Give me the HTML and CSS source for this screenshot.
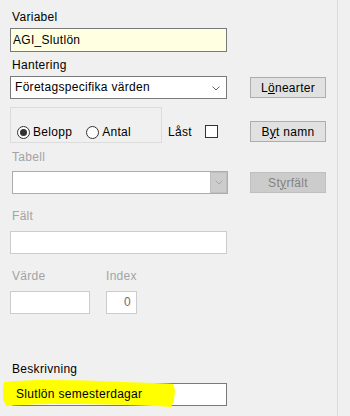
FILE: index.html
```html
<!DOCTYPE html>
<html lang="sv">
<head>
    <meta charset="UTF-8">
    <title>Variabel</title>
    <link rel="stylesheet" href="styles.css">
</head>
<body>
    <div class="panel">
        <div class="field">
            <label class="lbl">Variabel</label>
            <div class="box box-note">AGI_Slutlön</div>
        </div>

        <div class="field field-hantering">
            <label class="lbl">Hantering</label>
            <div class="row">
                <div class="combo">
                    <span>Företagspecifika värden</span>
                    <svg class="chev" width="8" height="5" viewBox="0 0 8 5"><polyline points="0.5,0.5 4,4 7.5,0.5" fill="none" stroke="#606060" stroke-width="1"/></svg>
                </div>
                <button class="btn">L<u>ö</u>nearter</button>
            </div>
        </div>

        <div class="row opts">
            <div class="group">
                <span class="opt"><span class="radio checked"></span>Belopp</span>
                <span class="opt opt-second"><span class="radio"></span>Antal</span>
            </div>
            <span class="lock">Låst</span>
            <span class="check"></span>
            <button class="btn btn-low">B<u>y</u>t namn</button>
        </div>

        <div class="field field-tabell">
            <label class="lbl off">Tabell</label>
            <div class="row">
                <div class="combo combo-off">
                    <span class="drop">
                        <svg width="8" height="5" viewBox="0 0 8 5"><polyline points="0.5,0.5 4,4 7.5,0.5" fill="none" stroke="#a8a8a8" stroke-width="1"/></svg>
                    </span>
                </div>
                <button class="btn btn-off">St<u>y</u>rfält</button>
            </div>
        </div>

        <div class="field field-falt">
            <label class="lbl off">Fält</label>
            <div class="box box-off"></div>
        </div>

        <div class="field field-varde">
            <div class="col">
                <label class="lbl off">Värde</label>
                <div class="box box-off box-varde"></div>
            </div>
            <div class="col col-index">
                <label class="lbl off">Index</label>
                <div class="box box-off box-index">0</div>
            </div>
        </div>

        <div class="field field-beskr">
            <label class="lbl">Beskrivning</label>
            <div class="box box-beskr">
                <!-- highlighter stroke over the field -->
                <svg class="marker" width="176" height="30" viewBox="0 0 176 30">
                    <path d="M2,3 C30,0 80,1 120,3 C145,4 162,4 171,5 L173,11 L172,22 L169,28 C140,26 100,25 60,25 C35,25 15,26 4,27 L1,20 L1,9 Z" fill="#ffff00"/>
                </svg>
                <span class="txt">Slutlön semesterdagar</span>
            </div>
        </div>
    </div>
</body>
</html>
```

FILE: styles.css
```css
/* Variabel dialog */
body {
    margin: 0;
    background-color: #f0f0f0;
    font-family: "Liberation Sans", Arial, sans-serif;
    font-size: 12px;
    letter-spacing: 0.3px;
    color: #000;
}

.panel {
    width: 338px;
    height: 416px;
    box-sizing: border-box;
    border-right: 1px solid #dadada;
    padding: 10px 0 0 10px;
}

.lbl {
    display: block;
    line-height: 14px;
    padding-left: 2px;
    margin-bottom: 4px;
}

.lbl.off {
    color: #a3a3a3;
}

.row {
    display: flex;
    align-items: center;
    width: 316px;
}

.box {
    box-sizing: border-box;
    width: 217px;
    height: 23px;
    border: 1px solid #7a7a7a;
    background-color: #fff;
    padding: 0 2px;
    line-height: 21px;
    white-space: nowrap;
}

.box-note {
    height: 24px;
    line-height: 22px;
    background-color: #ffffe1;
}

.box-off {
    border-color: #cccccc;
}

/* Hantering */
.field-hantering {
    margin-top: 6px;
}

.combo {
    position: relative;
    box-sizing: border-box;
    width: 217px;
    height: 23px;
    border: 1px solid #7a7a7a;
    background-color: #fff;
    padding-left: 4px;
    line-height: 21px;
}

.chev {
    position: absolute;
    right: 6px;
    top: 9px;
}

.btn {
    box-sizing: border-box;
    width: 76px;
    height: 21px;
    margin-left: auto;
    padding: 0;
    border: 1px solid #adadad;
    background-color: #e1e1e1;
    font-family: inherit;
    font-size: 12px;
    letter-spacing: 0.3px;
    color: #000;
}

.btn-off {
    background-color: #cccccc;
    border-color: #bfbfbf;
    color: #838383;
}

/* radio group row */
.opts {
    margin-top: 8px;
    height: 36px;
    align-items: flex-end;
}

.group {
    box-sizing: border-box;
    width: 152px;
    height: 36px;
    border: 1px solid #dcdcdc;
    display: flex;
    align-items: flex-end;
    padding: 0 0 3px 6px;
}

.opt {
    display: flex;
    align-items: center;
    line-height: 14px;
}

.opt-second {
    margin-left: 14px;
}

.radio {
    position: relative;
    box-sizing: border-box;
    width: 13px;
    height: 13px;
    margin-right: 3px;
    border: 1px solid #333;
    border-radius: 50%;
    background-color: #fff;
}

.radio.checked::after {
    content: "";
    position: absolute;
    left: 2px;
    top: 2px;
    width: 7px;
    height: 7px;
    border-radius: 50%;
    background-color: #333;
}

.lock {
    line-height: 14px;
    margin: 0 0 4px 6px;
}

.check {
    box-sizing: border-box;
    width: 13px;
    height: 13px;
    margin: 0 0 5px 13px;
    border: 1px solid #333;
    background-color: #fff;
}

.btn-low {
    margin-bottom: 1px;
}

/* Tabell */
.field-tabell {
    margin-top: 7px;
}

.field-tabell .lbl {
    margin-bottom: 7px;
}

.combo-off {
    width: 216px;
    margin-left: 2px;
    border-color: #adadad;
}

.drop {
    position: absolute;
    right: 0;
    top: 0;
    box-sizing: border-box;
    width: 17px;
    height: 21px;
    border: 1px solid #bfbfbf;
    background-color: #cccccc;
    display: flex;
    align-items: center;
    justify-content: center;
}

.field-tabell .btn {
    margin-left: auto;
}

/* Fält */
.field-falt {
    margin-top: 15px;
}

.field-falt .lbl,
.field-varde .lbl {
    margin-bottom: 8px;
}

/* Värde / Index */
.field-varde {
    margin-top: 15px;
    display: flex;
}

.box-varde {
    width: 80px;
}

.col-index {
    margin-left: 16px;
}

.col-index .lbl {
    padding-left: 0;
}

.box-index {
    width: 31px;
    text-align: right;
    padding-right: 5px;
    color: #6d6d6d;
}

/* Beskrivning */
.field-beskr {
    margin-top: 48px;
}

.field-beskr .lbl {
    margin-bottom: 7px;
}

.box-beskr {
    position: relative;
    width: 215px;
    margin-left: 2px;
    padding-left: 3px;
}

.marker {
    position: absolute;
    left: -11px;
    top: -5px;
}

.txt {
    position: relative;
}
```
